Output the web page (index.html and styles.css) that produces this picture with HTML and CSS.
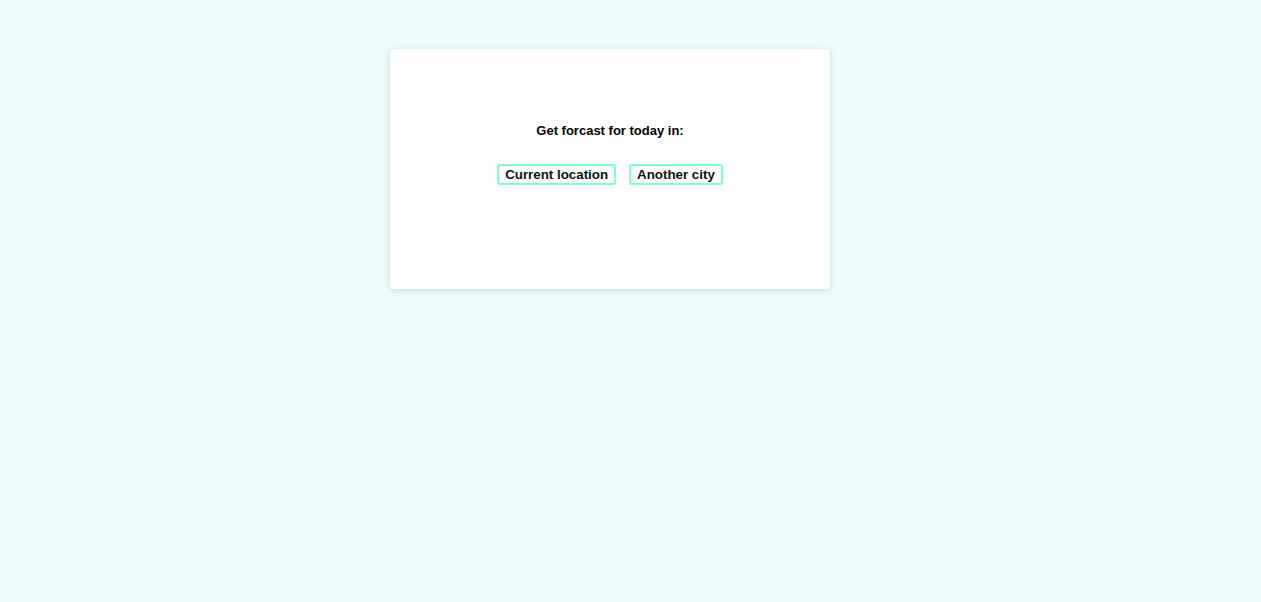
FILE: index.html
```html
<!DOCTYPE html>
<html>
<head>
<meta charset="utf-8">
<link rel="stylesheet" href="styles.css">
</head>
<body>
<div class="page">
  <div class="card">
    <p class="title">Get forcast for today in:</p>
    <div class="actions">
      <button class="btn">Current location</button>
      <button class="btn">Another city</button>
    </div>
  </div>
</div>
</body>
</html>
```

FILE: styles.css
```css
html, body {
  margin: 0;
  padding: 0;
  background: #ebfdfd;
  height: 100%;
}
.page {
  padding: 49px 0 0 390px;
}
.card {
  width: 440px;
  height: 240px;
  box-sizing: border-box;
  background: #ffffff;
  border-radius: 4px;
  box-shadow: 0 1px 6px rgba(120, 160, 160, 0.35);
  padding-top: 74px;
  display: flex;
  flex-direction: column;
  align-items: center;
}
.title {
  margin: 0;
  font-family: "Liberation Sans", Arial, sans-serif;
  font-weight: bold;
  font-size: 13px;
  line-height: 16px;
  color: #000;
}
.actions {
  display: flex;
  gap: 13px;
  margin-top: 25px;
}
.btn {
  font-family: "Liberation Sans", Arial, sans-serif;
  font-weight: bold;
  font-size: 13.333px;
  line-height: 15px;
  color: #111;
  background: #fff;
  border: 2px solid #7fffd4;
  border-radius: 3px;
  padding: 1px 6px;
  margin: 0;
}
```
